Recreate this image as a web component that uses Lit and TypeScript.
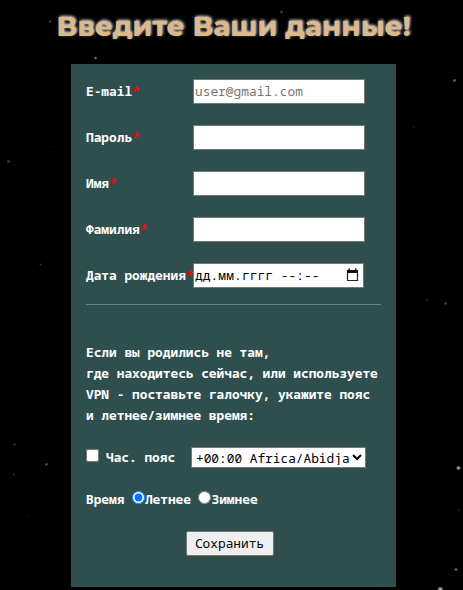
import { LitElement, html, svg, css } from "lit";
import { customElement } from "lit/decorators.js";

interface Star {
  x: number;
  y: number;
  r: number;
  o: number;
}

const STARS: Star[] = [
  { x: 50, y: 21.5, r: 1.2, o: 0.3 },
  { x: 95.5, y: 58, r: 1.3, o: 0.5 },
  { x: 281.5, y: 12, r: 1.3, o: 0.3 },
  { x: 8.5, y: 161.5, r: 1.3, o: 0.3 },
  { x: 51, y: 146.5, r: 1, o: 0.08 },
  { x: 40.5, y: 264.5, r: 1.1, o: 0.18 },
  { x: 14.5, y: 444.5, r: 1.2, o: 0.22 },
  { x: 46.5, y: 464.5, r: 1.3, o: 0.35 },
  { x: 14, y: 474.5, r: 1.1, o: 0.18 },
  { x: 29, y: 515.5, r: 1, o: 0.07 },
  { x: 454.5, y: 80.5, r: 1.4, o: 0.45 },
  { x: 413.5, y: 127, r: 1, o: 0.1 },
  { x: 427.2, y: 300.3, r: 1.1, o: 0.16 },
  { x: 445.5, y: 303.5, r: 1.3, o: 0.28 },
  { x: 458.5, y: 468, r: 1.8, o: 0.7 },
  { x: 459, y: 510, r: 1.1, o: 0.12 },
  { x: 456, y: 569.5, r: 1.4, o: 0.5 },
  { x: 440.3, y: 589.5, r: 2.2, o: 0.8 },
];

const FIELDS = [
  { label: "E-mail", placeholder: "user@gmail.com" },
  { label: "Пароль", placeholder: "" },
  { label: "Имя", placeholder: "" },
  { label: "Фамилия", placeholder: "" },
];

@customElement("app-root")
export class AppRoot extends LitElement {
  static styles = css`
    :host {
      display: block;
      position: relative;
      height: 590px;
      overflow: hidden;
      background: #000;
      color: #fff;
      font: bold 12.8px/21px "Noto Sans Mono", "DejaVu Sans Mono", monospace;
    }
    * {
      box-sizing: border-box;
    }
    .sky {
      position: absolute;
      inset: 0;
    }
    .title {
      position: relative;
      margin: 0;
      height: 64px;
      padding: 9px 0 0 4px;
      text-align: center;
      white-space: nowrap;
      color: #deb887;
      font: 700 28px/34px Montserrat, "Open Sans", sans-serif;
      text-shadow: 1px -1px 3px rgba(255, 255, 255, 0.9);
    }
    .card {
      position: relative;
      width: 325px;
      height: 523px;
      margin-left: 71px;
      padding: 15px 15px 0;
      background: #2f4f4f;
    }
    .row {
      display: flex;
      align-items: center;
      height: 25px;
      margin-bottom: 21px;
      white-space: pre;
    }
    .label {
      width: 107px;
      flex: none;
    }
    .star {
      color: #f00;
    }
    .field {
      width: 172px;
      height: 25px;
      margin: 0;
      padding: 0 1px 2px;
      border: 1px solid #767676;
      border-radius: 0;
      outline: none;
      background: #fff;
      color: #000;
      font: 12.85px "Noto Sans Mono", "DejaVu Sans Mono", monospace;
    }
    .field::placeholder {
      color: #757575;
    }
    .date {
      display: flex;
      align-items: center;
      justify-content: space-between;
      width: 171px;
      padding: 0 4px 2px 1px;
      letter-spacing: 0.08px;
    }
    .rule {
      height: 1px;
      margin: -5px 0 37px;
      background: #6d8484;
    }
    .note {
      margin: 0;
      white-space: pre;
    }
    .zone,
    .season {
      display: flex;
      align-items: center;
      height: 21px;
      margin-top: 21px;
      white-space: pre;
    }
    .zone {
      width: 280px;
    }
    .box {
      width: 13px;
      height: 13px;
      margin: 0 7px 4px 0;
    }
    .select {
      width: 175px;
      height: 21px;
      margin: 0 0 0 auto;
      padding: 0 0 2px;
      border: 1px solid #767676;
      border-radius: 0;
      background: #fff;
      color: #000;
      font: 12.8px "Noto Sans Mono", "DejaVu Sans Mono", monospace;
    }
    .radio {
      width: 13px;
      height: 13px;
      margin: 0 0 4px 7.5px;
    }
    .button {
      display: block;
      width: 88px;
      height: 25px;
      margin: 21px 0 0 100px;
      padding: 0 1px 1px 0;
      border: 1px solid #767676;
      border-radius: 2px;
      background: #efefef;
      color: #000;
      font: 12.8px "Noto Sans Mono", "DejaVu Sans Mono", monospace;
    }
  `;

  render() {
    return html`
      <svg class="sky" width="463" height="590">
        <defs>
          <radialGradient id="glow">
            <stop offset="0" stop-color="#fff" />
            <stop offset=".4" stop-color="#fff" stop-opacity=".7" />
            <stop offset="1" stop-color="#fff" stop-opacity="0" />
          </radialGradient>
        </defs>
        ${STARS.map(
          (s) => svg`<circle cx=${s.x} cy=${s.y} r=${s.r * 1.5} opacity=${s.o} fill="url(#glow)" />`
        )}
      </svg>
      <h1 class="title">Введите Ваши данные!</h1>
      <form class="card">
        ${FIELDS.map(
          (f) => html`<div class="row"><label class="label">${f.label}<span class="star">*</span></label><input class="field" placeholder=${f.placeholder} /></div>`
        )}
        <div class="row"><label class="label">Дата рождения<span class="star">*</span></label><div class="field date"><span>дд.мм.гггг --:--</span><svg width="13" height="14" viewBox="0 0 13 14"><path d="M1.5 3v9.5h10V3" fill="none" stroke="#222" stroke-width="1.2" /><path d="M1 2h11v3H1zM2.5.5H4V3H2.5zM9 .5h1.5V3H9z" fill="#111" /></svg></div></div>
        <div class="rule"></div>
        <p class="note">Если вы родились не там,
где находитесь сейчас, или используете
VPN - поставьте галочку, укажите пояс
и летнее/зимнее время:</p>
        <div class="zone"><input class="box" type="checkbox" /><span>Час. пояс</span><select class="select"><option>+00:00 Africa/Abidjan</option></select></div>
        <div class="season"><span>Время</span><input class="radio" type="radio" name="season" checked /><span>Летнее</span><input class="radio" type="radio" name="season" /><span>Зимнее</span></div>
        <button class="button" type="button">Сохранить</button>
      </form>
    `;
  }
}
